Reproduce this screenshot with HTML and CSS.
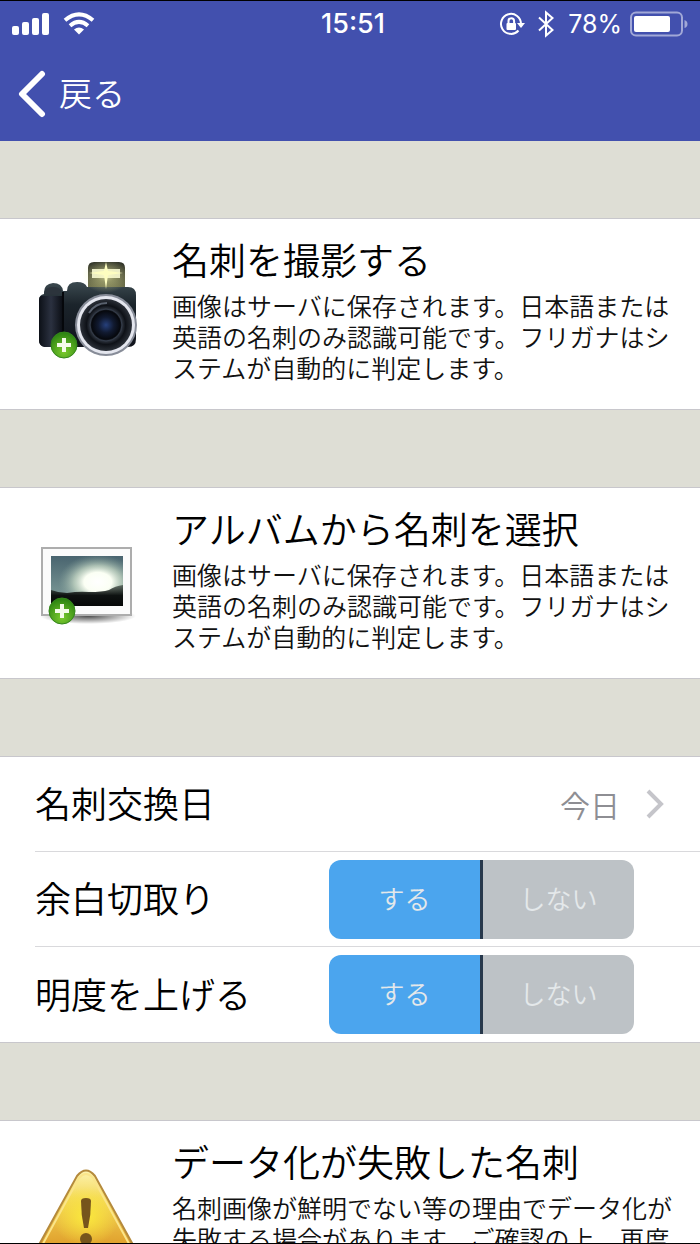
FILE: index.html
```html
<!DOCTYPE html>
<html lang="ja">
<head>
    <meta charset="UTF-8">
    <meta name="viewport" content="width=device-width, initial-scale=1.0">
    <title>名刺を追加</title>
    <link rel="stylesheet" href="styles.css">
</head>
<body>
    <header>
        <div class="status">
            <div class="status-left">
                <svg width="38" height="24" viewBox="0 0 38 24" fill="#fff">
                    <rect x="0" y="14" width="7" height="9" rx="2"/>
                    <rect x="10" y="10" width="7" height="13" rx="2"/>
                    <rect x="20" y="6" width="7" height="17" rx="2"/>
                    <rect x="30" y="1" width="7" height="22" rx="2"/>
                </svg>
                <svg width="32" height="24" viewBox="0 0 32 24" fill="none" stroke="#fff" stroke-width="4">
                    <path d="M2 8.300Q16 -3.500 30 8.300"/>
                    <path d="M7 13.700Q16 6 25 13.700"/>
                    <path d="M11 17.500Q16 13.500 21 17.500L16 22.500Z" fill="#fff" stroke="none"/>
                </svg>
            </div>
            <div class="clock">15:51</div>
            <div class="status-right">
                <svg width="26" height="26" viewBox="0 0 26 26" fill="none" stroke="#fff" stroke-width="2">
                    <path d="M19.500 19.500A10 10 0 1 1 22 13"/>
                    <path d="M18 12h8l-4 5z" fill="#fff" stroke="none"/>
                    <rect x="7.500" y="12" width="9.500" height="7" rx="1" fill="#fff" stroke="none"/>
                    <path d="M9.500 12.500V10a2.800 2.800 0 0 1 5.600 0v2.500"/>
                </svg>
                <svg class="bluetooth" width="16" height="28" viewBox="0 0 16 28" fill="none" stroke="#fff" stroke-width="2">
                    <path d="M1 7.500L14.500 20L8 25.500V2.500L14.500 8L1 20.500"/>
                </svg>
                <span class="percent">78%</span>
                <svg class="battery" width="58" height="26" viewBox="0 0 58 26">
                    <rect x="1" y="1.500" width="51" height="23" rx="5" fill="none" stroke="#fff" stroke-opacity=".5" stroke-width="2"/>
                    <rect x="4" y="5" width="36" height="16" rx="2" fill="#fff"/>
                    <path d="M54.500 9q3 1 3 4t-3 4z" fill="#fff" fill-opacity=".5"/>
                </svg>
            </div>
        </div>
        <nav>
            <button type="button" class="back">
                <svg width="28" height="48" viewBox="0 0 28 48" fill="none" stroke="#fff" stroke-width="6" stroke-linecap="round">
                    <path d="M24 4L4 24L24 44" stroke-linejoin="round"/>
                </svg>
                <span>戻る</span>
            </button>
        </nav>
    </header>

    <main>
        <a href="#camera" class="card">
            <svg class="icon" viewBox="0 0 104 104">
                <defs>
                    <linearGradient id="body" x1="0" y1="0" x2="0" y2="1">
                        <stop offset="0" stop-color="#3c4a50"/>
                        <stop offset=".35" stop-color="#1b242b"/>
                        <stop offset="1" stop-color="#10131c"/>
                    </linearGradient>
                    <linearGradient id="grip" x1="0" y1="0" x2="1" y2="0">
                        <stop offset="0" stop-color="#0c1017"/>
                        <stop offset=".5" stop-color="#2b3140"/>
                        <stop offset="1" stop-color="#0a0d13"/>
                    </linearGradient>
                    <linearGradient id="flash" x1="0" y1="0" x2="0" y2="1">
                        <stop offset="0" stop-color="#22251f"/>
                        <stop offset="1" stop-color="#6d6f4a"/>
                    </linearGradient>
                    <radialGradient id="glow">
                        <stop offset="0" stop-color="#ffffc8"/>
                        <stop offset=".4" stop-color="#f4f6a8" stop-opacity=".5"/>
                        <stop offset="1" stop-color="#f4f6a8" stop-opacity="0"/>
                    </radialGradient>
                    <radialGradient id="lens">
                        <stop offset="0" stop-color="#26407c"/>
                        <stop offset=".3" stop-color="#111a30"/>
                        <stop offset=".55" stop-color="#06080d"/>
                        <stop offset=".62" stop-color="#2c323c"/>
                        <stop offset=".75" stop-color="#0e1117"/>
                        <stop offset="1" stop-color="#2b3038"/>
                    </radialGradient>
                    <radialGradient id="green" cx=".5" cy=".75" r=".7">
                        <stop offset="0" stop-color="#7ccb2e"/>
                        <stop offset="1" stop-color="#2e8512"/>
                    </radialGradient>
                </defs>
                <path d="M8 30q0-8 9-9q9 0 10 8h4q0-9 10-9q8 0 10 5h41q8 0 8 8v44q0 8-8 8H9q-6-1-6-7V38q0-5 5-6z" fill="url(#body)"/>
                <path d="M5 34h22v48q-2 3-6 3H9q-6-1-6-7V38q0-3 2-4z" fill="url(#grip)"/>
                <ellipse cx="17" cy="29" rx="8" ry="4" fill="#2c343c"/>
                <path d="M27 30v52" stroke="#05070b" stroke-width="2"/>
                <path d="M52 25V6q0-6 6-6h25q6 0 6 6v19z" fill="url(#flash)"/>
                <rect x="56" y="7" width="28" height="9" fill="#e9ead0"/>
                <ellipse cx="70" cy="13" rx="24" ry="18" fill="url(#glow)" opacity=".7"/>
                <path d="M70 0l2 9l15 2l-15 2l-2 14l-2-14l-15-2l15-2z" fill="#fdfdc0"/>
                <circle cx="70" cy="63" r="31" fill="#878c98"/>
                <circle cx="70" cy="63" r="29" fill="#e4e6ee"/>
                <circle cx="70" cy="63" r="26" fill="url(#lens)"/>
                <circle cx="70" cy="63" r="16" fill="none" stroke="#343c4a" stroke-width="1"/>
                <path d="M53 51a21 21 0 0 1 18-10" fill="none" stroke="#59616e" stroke-width="2"/>
                <circle cx="28" cy="83" r="13" fill="url(#green)" stroke="#34861b"/>
                <path d="M28 76v14M21 83h14" stroke="#f5fbe9" stroke-width="4"/>
            </svg>
            <div class="text">
                <h2>名刺を撮影する</h2>
                <p>画像はサーバに保存されます。日本語または英語の名刺のみ認識可能です。フリガナはシステムが自動的に判定します。</p>
            </div>
        </a>

        <a href="#album" class="card">
            <svg class="icon" viewBox="0 0 104 104">
                <defs>
                    <linearGradient id="sky" x1="0" y1="0" x2="0" y2="1">
                        <stop offset="0" stop-color="#49646f"/>
                        <stop offset="1" stop-color="#86a39e"/>
                    </linearGradient>
                    <radialGradient id="sun" cx=".65" cy=".52" r=".55">
                        <stop offset="0" stop-color="#fff"/>
                        <stop offset=".35" stop-color="#fbfff4"/>
                        <stop offset=".6" stop-color="#cfe0cb" stop-opacity=".7"/>
                        <stop offset="1" stop-color="#88a49a" stop-opacity="0"/>
                    </radialGradient>
                    <linearGradient id="hill" x1="0" y1="0" x2="0" y2="1">
                        <stop offset="0" stop-color="#3a443d" stop-opacity=".7"/>
                        <stop offset=".5" stop-color="#0e1211"/>
                        <stop offset="1" stop-color="#050707"/>
                    </linearGradient>
                    <radialGradient id="shade">
                        <stop offset="0" stop-color="#000" stop-opacity=".7"/>
                        <stop offset="1" stop-color="#000" stop-opacity="0"/>
                    </radialGradient>
                </defs>
                <ellipse cx="52" cy="85" rx="48" ry="8" fill="url(#shade)"/>
                <rect x="6" y="17" width="89" height="67" fill="#fbfbfb" stroke="#adadad" stroke-width="2"/>
                <rect x="15" y="25" width="72" height="50" fill="url(#sky)"/>
                <rect x="15" y="25" width="72" height="50" fill="url(#sun)"/>
                <path d="M15 59q8 3 16 3q12-2 22-1q13 0 20-2q6-4 14-5v21H15z" fill="url(#hill)"/>
                <circle cx="26" cy="80" r="13" fill="url(#green)" stroke="#34861b"/>
                <path d="M26 73v14M19 80h14" stroke="#f5fbe9" stroke-width="4"/>
            </svg>
            <div class="text">
                <h2>アルバムから名刺を選択</h2>
                <p>画像はサーバに保存されます。日本語または英語の名刺のみ認識可能です。フリガナはシステムが自動的に判定します。</p>
            </div>
        </a>

        <form class="settings">
            <a href="#date" class="row">
                <span class="label">名刺交換日</span>
                <span class="value">今日</span>
                <svg width="18" height="30" viewBox="0 0 18 30" fill="none" stroke="#c5c5ca" stroke-width="4">
                    <path d="M2 2L15 15L2 28"/>
                </svg>
            </a>
            <div class="row" role="radiogroup" aria-labelledby="trim">
                <span class="label" id="trim">余白切取り</span>
                <div class="switch">
                    <label><input type="radio" name="trim" checked><span>する</span></label>
                    <label><input type="radio" name="trim"><span>しない</span></label>
                </div>
            </div>
            <div class="row" role="radiogroup" aria-labelledby="light">
                <span class="label" id="light">明度を上げる</span>
                <div class="switch">
                    <label><input type="radio" name="light" checked><span>する</span></label>
                    <label><input type="radio" name="light"><span>しない</span></label>
                </div>
            </div>
        </form>

        <a href="#failed" class="card">
            <svg class="icon" viewBox="0 0 104 104">
                <defs>
                    <linearGradient id="warn" x1="0" y1="0" x2="0" y2="1">
                        <stop offset="0" stop-color="#fdf3b0"/>
                        <stop offset=".3" stop-color="#f4d95a"/>
                        <stop offset=".8" stop-color="#e0a02c"/>
                        <stop offset="1" stop-color="#cf8a1c"/>
                    </linearGradient>
                    <radialGradient id="shine" cx=".5" cy=".5" r=".35">
                        <stop offset="0" stop-color="#fbe93c"/>
                        <stop offset="1" stop-color="#fbe93c" stop-opacity="0"/>
                    </radialGradient>
                </defs>
                <path d="M41 12q9-11 18 0L101 88q4 11-8 11H7q-12 0-8-11z" fill="url(#warn)" stroke="#b58a3c" stroke-width="2"/>
                <path d="M43 14q7-8 14 0L97 87q3 8-6 8H9q-9 0-6-8z" fill="url(#shine)" stroke="#fbe58a" stroke-width="2"/>
                <path d="M45 37q0-3 5-3t5 3q0 14-3 27h-4q-3-13-3-27z" fill="#76551c"/>
                <circle cx="50" cy="75" r="6" fill="#76551c"/>
            </svg>
            <div class="text">
                <h2>データ化が失敗した名刺</h2>
                <p>名刺画像が鮮明でない等の理由でデータ化が失敗する場合があります。ご確認の上、再度</p>
            </div>
        </a>
    </main>
</body>
</html>
```
FILE: styles.css
```css
* {
    box-sizing: border-box;
}

body {
    margin: 0;
    height: 100vh;
    overflow: hidden;
    background-color: #deded5;
    border-top: 1px solid #000;
    border-bottom: 1px solid #000;
    font-family: "Noto Sans CJK JP", sans-serif;
    font-weight: 350;
    color: #000;
}

a {
    color: inherit;
    text-decoration: none;
}

svg {
    display: block;
    flex: none;
}

header {
    background-color: #4250ae;
    color: #fff;
}

.status {
    display: grid;
    grid-template-columns: 1fr auto 1fr;
    align-items: center;
    height: 46px;
    padding: 0 12px;
    font: 400 25px/46px Inter, sans-serif;
}

.status-left,
.status-right {
    display: flex;
    align-items: center;
}

.status-left {
    gap: 13px;
}

.status-right {
    justify-content: flex-end;
}

.clock {
    margin-left: 6px;
    font-size: 27px;
    font-weight: 500;
}

.bluetooth {
    margin: 0 14px 0 13px;
}

.battery {
    margin-left: 8px;
}

nav {
    height: 94px;
    padding: 0 18px;
    display: flex;
    align-items: center;
}

.back {
    display: flex;
    align-items: center;
    gap: 13px;
    padding: 0;
    border: 0;
    background: none;
    color: #fff;
    font: inherit;
    font-size: 33px;
    line-height: 48px;
}

.back span {
    padding-bottom: 4px;
}

main {
    display: flex;
    flex-direction: column;
    gap: 77px;
    padding-top: 77px;
}

.card,
.settings {
    background-color: #fff;
    border-top: 1px solid #c8c7cc;
    border-bottom: 1px solid #c8c7cc;
}

.card {
    display: flex;
    align-items: center;
    gap: 32px;
    min-height: 192px;
    padding: 0 8px 0 36px;
}

.icon {
    width: 104px;
    height: 104px;
}

.text {
    flex: 1;
    align-self: flex-start;
    padding: 18px 0 24px;
}

h2 {
    margin: 0 0 9px;
    font-size: 37px;
    line-height: 44px;
    font-weight: 350;
}

p {
    margin: 0;
    font-size: 25px;
    line-height: 31px;
    color: #111;
}

.row {
    display: flex;
    align-items: center;
    height: 95px;
    margin-left: 35px;
    padding-right: 36px;
    border-bottom: 1px solid #d9d9dc;
}

.row:last-child {
    border-bottom: 0;
}

.label {
    flex: 1;
    padding-bottom: 4px;
    font-size: 36px;
}

.value {
    margin-right: 26px;
    font-size: 30px;
    color: #8e8e93;
}

.switch {
    display: flex;
    width: 305px;
    height: 79px;
    margin-right: 30px;
    border-radius: 12px;
    overflow: hidden;
}

.switch label {
    position: relative;
    flex: 1;
}

.switch label + label {
    border-left: 3px solid #27384c;
}

.switch input {
    position: absolute;
    opacity: 0;
}

.switch span {
    display: block;
    height: 79px;
    font-size: 26px;
    line-height: 75px;
    text-align: center;
    color: #e4e8ea;
    background-color: #bdc2c6;
}

.switch input:checked + span {
    background-color: #4ba5ee;
}
```
